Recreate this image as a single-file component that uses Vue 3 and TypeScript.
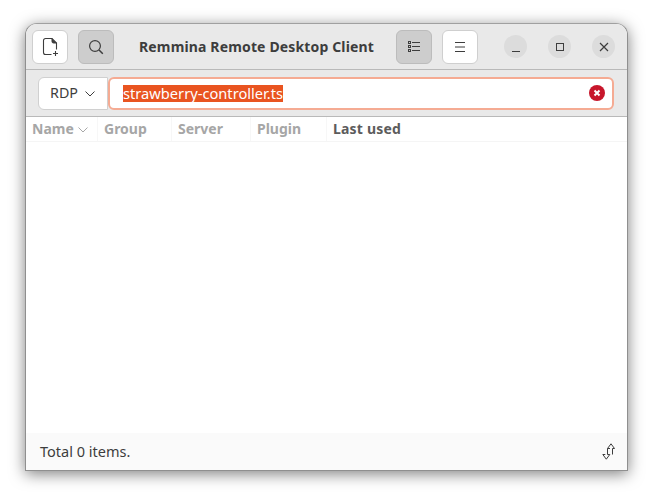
<script setup lang="ts">
const columns: { label: string; width: number; active?: boolean; sort?: boolean }[] = [
  { label: 'Name', width: 72, sort: true },
  { label: 'Group', width: 74 },
  { label: 'Server', width: 79 },
  { label: 'Plugin', width: 76 },
  { label: 'Last used', width: 0, active: true },
]
</script>

<template>
  <div class="page">
    <div class="window">
      <header class="titlebar">
        <button class="btn light first">
          <svg width="18" height="20" viewBox="0 0 18 20" fill="none" stroke="#3d3d3d" stroke-width="1.1">
            <path d="M10.5 17.5H4.5a2 2 0 0 1-2-2V3.5a2 2 0 0 1 2-2H11l4.5 4.5v6.5" />
            <path d="M11 1.5v3a1.5 1.5 0 0 0 1.5 1.5h3" fill="#3d3d3d" stroke-width="1" />
            <path d="M12 16.5h5M14.5 14v5" />
          </svg>
        </button>
        <button class="btn pressed second">
          <svg width="16" height="16" viewBox="0 0 16 16" fill="none" stroke="#3d3d3d" stroke-width="1.2">
            <circle cx="7" cy="7" r="5.4" />
            <path d="M11 11l3.8 3.8" stroke-width="1.5" />
          </svg>
        </button>
        <h1 class="title">Remmina Remote Desktop Client</h1>
        <button class="btn pressed">
          <svg width="12" height="11" viewBox="0 0 12 11" fill="none" stroke="#3d3d3d">
            <rect x="0.5" y="0.5" width="2" height="2" />
            <rect x="0.5" y="4.5" width="2" height="2" />
            <rect x="0.5" y="8.5" width="2" height="2" />
            <path d="M4 1.5h8M4 5.5h8M4 9.5h8" />
          </svg>
        </button>
        <button class="btn light menu">
          <svg width="12" height="10" viewBox="0 0 12 10" fill="none" stroke="#3d3d3d">
            <path d="M1 .5h10M1 5h10M1 9.5h10" />
          </svg>
        </button>
        <div class="controls">
          <span class="ctl">
            <svg width="10" height="10" viewBox="0 0 10 10" fill="none" stroke="#3d3d3d"><path d="M1 9.5h8" /></svg>
          </span>
          <span class="ctl">
            <svg width="10" height="10" viewBox="0 0 10 10" fill="none" stroke="#3d3d3d"><rect x="1.5" y="1.5" width="7" height="7" /></svg>
          </span>
          <span class="ctl">
            <svg width="10" height="10" viewBox="0 0 10 10" fill="none" stroke="#3d3d3d" stroke-width="1.2"><path d="M1 1l8 8M9 1l-8 8" /></svg>
          </span>
        </div>
      </header>

      <div class="toolbar">
        <button class="combo">
          <span>RDP</span>
          <svg class="chev" width="10" height="6" viewBox="0 0 10 6" fill="none" stroke="#3d3d3d"><path d="M.5.5L5 5 9.5.5" /></svg>
        </button>
        <div class="entry">
          <span class="selection">strawberry-controller.ts</span>
          <svg class="clear" width="16" height="16" viewBox="0 0 16 16">
            <circle cx="8" cy="8" r="8" fill="#c7162b" />
            <path d="M5.5 5.5l5 5M10.5 5.5l-5 5" stroke="#fff" stroke-width="2" />
          </svg>
        </div>
      </div>

      <div class="columns">
        <div
          v-for="c in columns"
          :key="c.label"
          class="col"
          :class="{ active: c.active }"
          :style="c.width ? { width: c.width + 'px' } : undefined"
        >
          <span>{{ c.label }}</span>
          <svg v-if="c.sort" class="chev" width="10" height="6" viewBox="0 0 10 6" fill="none" stroke="#a8a8a8"><path d="M.5.5L5 5 9.5.5" /></svg>
        </div>
      </div>

      <main class="list"></main>

      <footer class="status">
        <span class="total">Total 0 items.</span>
        <svg width="14" height="17" viewBox="0 0 14 17" fill="none" stroke="#3d3d3d" stroke-linejoin="round">
          <path d="M5.5 5.5L9 .8l3.5 4.7H10.5v6M8 5.5h-2.5" />
          <path d="M.8 11.5L4.3 16.2l3.5-4.7H5.5V5.5M3.3 11.5H.8" />
        </svg>
      </footer>
    </div>
  </div>
</template>

<style>
html,
body {
  margin: 0;
  background: #fff;
}
</style>

<style scoped>
.page {
  width: 653px;
  height: 499px;
  padding: 23px 25px 28px 25px;
  box-sizing: border-box;
  overflow: hidden;
  font-family: "Noto Sans", "DejaVu Sans", sans-serif;
  color: #3d3d3d;
}
.window {
  height: 448px;
  display: flex;
  flex-direction: column;
  box-sizing: border-box;
  border: 1px solid #8f8f8f;
  border-top-color: #a0a0a0;
  border-radius: 12px 12px 0 0;
  background: #fff;
  box-shadow: 0 3px 15px rgba(0, 0, 0, 0.5);
}
.titlebar {
  height: 46px;
  flex: none;
  display: flex;
  align-items: center;
  box-sizing: border-box;
  padding: 0 0 0 6px;
  background: #e9e9e9;
  border-bottom: 1px solid #b9b9b9;
  border-radius: 11px 11px 0 0;
}
.btn {
  width: 36px;
  height: 34px;
  flex: none;
  display: flex;
  align-items: center;
  justify-content: center;
  padding: 0;
  box-sizing: border-box;
  border-radius: 6px;
}
.light {
  background: #fff;
  border: 1px solid #cfcfcf;
}
.pressed {
  background: #cdcdcd;
  border: 1px solid #bcbcbc;
}
.second {
  margin-left: 10px;
}
.menu {
  margin-left: 10px;
}
.title {
  width: 282px;
  margin: 0;
  flex: none;
  text-align: center;
  font-size: 14px;
  line-height: 20px;
  font-weight: 700;
  letter-spacing: 0.15px;
  padding-left: 3px;
  box-sizing: border-box;
  color: #3d3d3d;
}
.controls {
  display: flex;
  gap: 21px;
  margin-left: 26px;
}
.ctl {
  width: 23px;
  height: 23px;
  display: flex;
  align-items: center;
  justify-content: center;
  border-radius: 50%;
  background: #dcdcdc;
}
.toolbar {
  height: 47px;
  flex: none;
  display: flex;
  align-items: center;
  box-sizing: border-box;
  padding: 0 13px 0 12px;
  background: #e9e9e9;
  border-bottom: 1px solid #b9b9b9;
}
.combo {
  width: 70px;
  height: 33px;
  flex: none;
  display: flex;
  align-items: center;
  gap: 7px;
  padding: 0 0 2px 11px;
  box-sizing: border-box;
  background: #fff;
  border: 1px solid #d0d0d0;
  border-radius: 6px 0 0 6px;
  font: inherit;
  font-size: 14.3px;
  color: #3d3d3d;
}
.chev {
  margin-top: 3px;
}
.entry {
  flex: 1;
  height: 33px;
  display: flex;
  align-items: center;
  justify-content: space-between;
  box-sizing: border-box;
  padding: 0 7px 0 13px;
  background: #fff;
  border: 2px solid #f5ab93;
  border-radius: 6px;
}
.selection {
  height: 17px;
  line-height: 16px;
  font-size: 14.67px;
  background: #e95420;
  color: #fff;
  white-space: nowrap;
}
.columns {
  height: 25px;
  flex: none;
  display: flex;
  background: #fff;
  border-bottom: 1px solid #f5f5f5;
  box-sizing: border-box;
}
.col {
  display: flex;
  align-items: center;
  gap: 4px;
  box-sizing: border-box;
  padding: 0 0 2px 6px;
  border-right: 1px solid #f7f7f7;
  font-size: 14px;
  font-weight: 700;
  color: #a6a6a6;
}
.col.active {
  flex: 1;
  border-right: 0;
  color: #5c5c5c;
  letter-spacing: 0.2px;
}
.list {
  flex: 1;
  background: #fff;
}
.status {
  height: 37px;
  flex: none;
  display: flex;
  align-items: center;
  justify-content: space-between;
  box-sizing: border-box;
  padding: 0 11px 0 14px;
  background: #fafafa;
  font-size: 14.5px;
  color: #3d3d3d;
}
.total {
  padding-bottom: 2px;
}
</style>
